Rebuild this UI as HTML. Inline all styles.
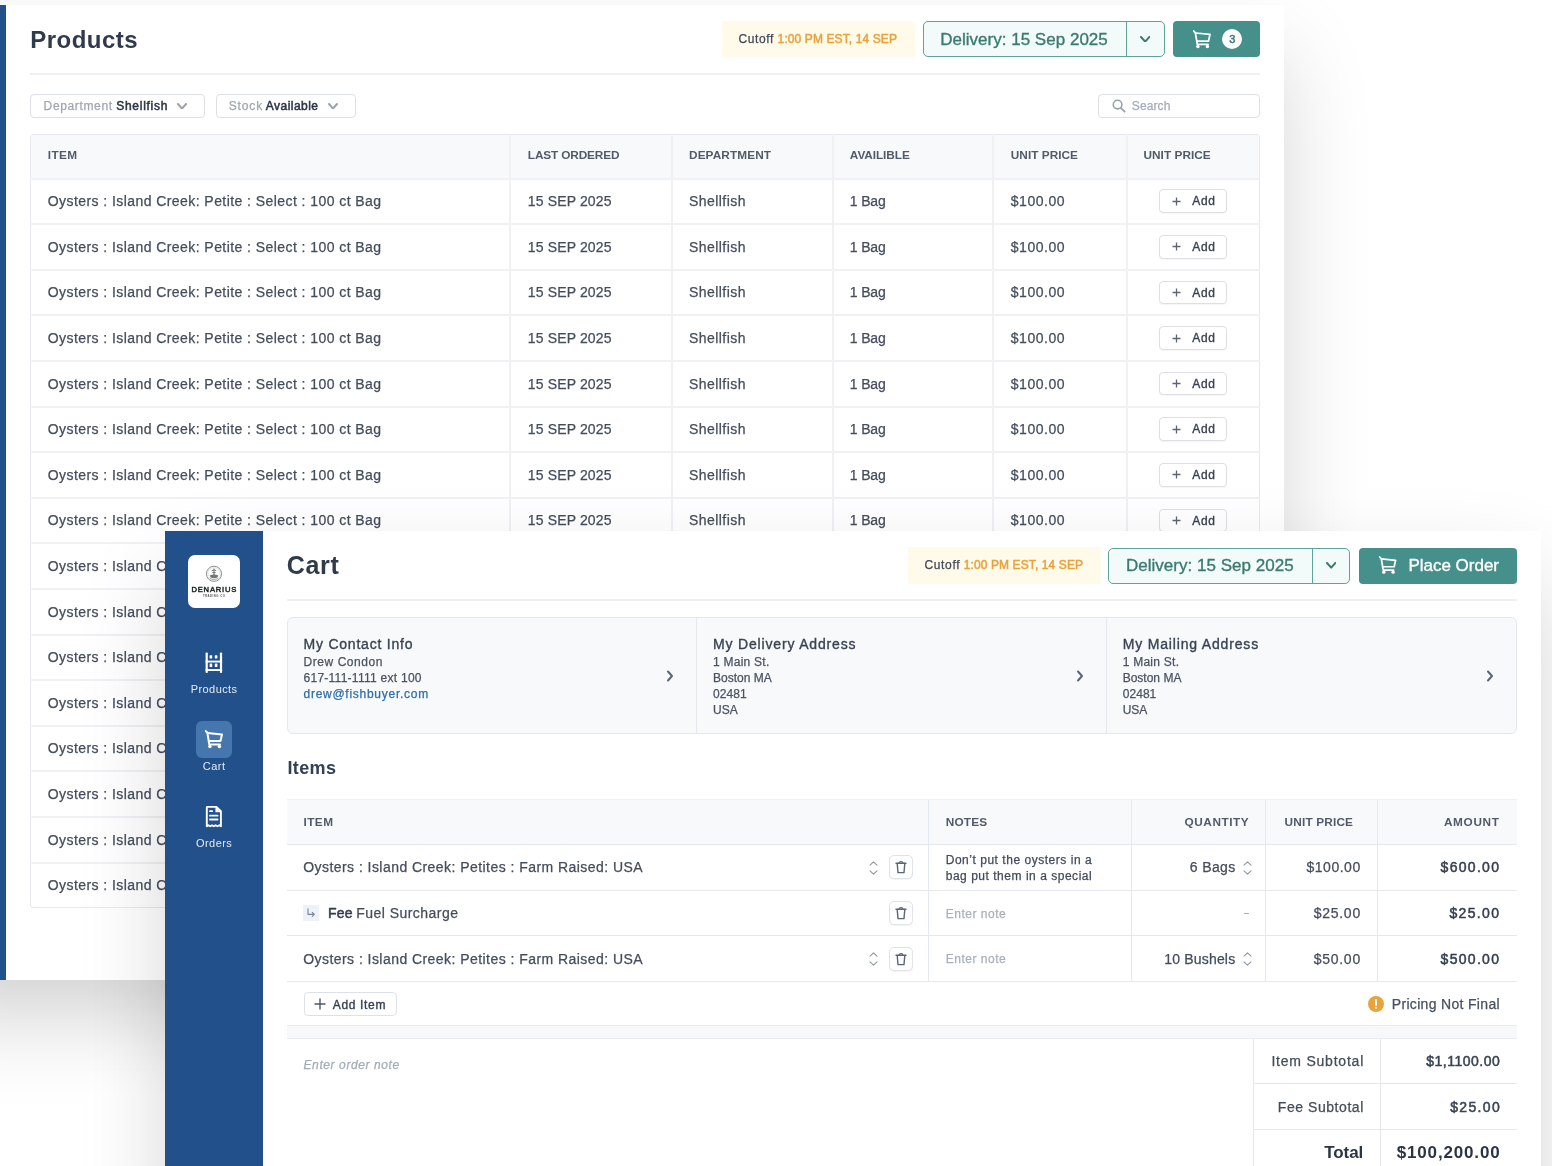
<!DOCTYPE html>
<html><head><meta charset="utf-8"><title>Products &amp; Cart</title>
<style>
html,body{margin:0;padding:0;}
body{width:1552px;height:1166px;position:relative;overflow:hidden;background:#fff;font-family:"Liberation Sans",sans-serif;}
.t{position:absolute;white-space:pre;}
</style></head><body><div id="root" style="position:absolute;left:0;top:0;width:1552px;height:1166px;will-change:transform;">
<div style="position:absolute;left:-92px;top:4.5px;width:1375.5px;height:975.5px;background:#fff;box-shadow:0 40px 90px -10px rgba(0,0,0,0.2),0 0 2px rgba(0,0,0,0.02);"></div>
<div style="position:absolute;left:0px;top:4.5px;width:6px;height:975.5px;background:#22508a;"></div>
<div class="t" style="left:30.20px;top:25.08px;font:700 24px/30px 'Liberation Sans',sans-serif;color:#2f3a4b;letter-spacing:0.498px;">Products</div>
<div style="position:absolute;left:30px;top:73px;width:1229.5px;height:2px;background:#eff0f3;"></div>
<div style="position:absolute;left:722px;top:21px;width:192.5px;height:36px;background:#fffaea;"></div>
<div class="t" style="left:738.40px;top:32.24px;font:400 12px/15px 'Liberation Sans',sans-serif;color:#414958;-webkit-text-stroke:0.25px #414958;letter-spacing:0.637px;">Cutoff</div>
<div class="t" style="left:777.60px;top:32.24px;font:400 12px/15px 'Liberation Sans',sans-serif;color:#e9a33b;-webkit-text-stroke:0.5px #e9a33b;letter-spacing:0.111px;">1:00 PM EST, 14 SEP</div>
<div style="position:absolute;left:922.5px;top:21px;width:242px;height:36px;box-sizing:border-box;border:1px solid #5fa399;border-radius:5px;background:#f2fbf9;"></div>
<div style="position:absolute;left:1126px;top:21px;width:1.2px;height:36px;background:#5fa399;"></div>
<div class="t" style="left:940.20px;top:28.81px;font:400 17px/21px 'Liberation Sans',sans-serif;color:#3b7a71;-webkit-text-stroke:0.35px #3b7a71;letter-spacing:0.016px;">Delivery: 15 Sep 2025</div>
<svg style="position:absolute;left:1139.8px;top:35.900000000000006px" width="10.4" height="6.6" viewBox="-1 -1 10.4 6.6"><path d="M0 0 L4.2 4.6 L8.4 0" fill="none" stroke="#3b7a71" stroke-width="2.0" stroke-linecap="round" stroke-linejoin="round"/></svg>
<div style="position:absolute;left:1172.8px;top:21px;width:87px;height:36px;background:#45908a;border-radius:4px;"></div>
<svg style="position:absolute;left:1193px;top:29.9px" width="18" height="19" viewBox="0 0 18 19"><g fill="none" stroke="#fff" stroke-width="1.75" stroke-linecap="round" stroke-linejoin="round"><path d="M0.5 0.9 L2.4 2.8 L4.3 14.4 L15.0 14.4"/><path d="M2.6 3.0 L17.0 4.4 L15.5 11.0 L3.7 11.0"/></g><circle cx="4.9" cy="16.5" r="1.75" fill="#fff"/><circle cx="14.4" cy="16.5" r="1.75" fill="#fff"/></svg>
<div style="position:absolute;left:1222px;top:28.8px;width:20.4px;height:20.4px;background:#fff;border-radius:50%;"></div>
<div class="t" style="left:1229.14px;top:32.39px;font:400 11px/14px 'Liberation Sans',sans-serif;color:#3b7a71;-webkit-text-stroke:0.5px #3b7a71;">3</div>
<div style="position:absolute;left:30px;top:94px;width:175px;height:23.5px;box-sizing:border-box;border:1px solid #dcdfe5;border-radius:4px;"></div>
<div class="t" style="left:43.60px;top:99.04px;font:400 12px/15px 'Liberation Sans',sans-serif;color:#a0a6b1;-webkit-text-stroke:0.25px #a0a6b1;letter-spacing:0.644px;">Department</div>
<div class="t" style="left:116.20px;top:99.04px;font:400 12px/15px 'Liberation Sans',sans-serif;color:#2b3344;-webkit-text-stroke:0.5px #2b3344;letter-spacing:0.730px;">Shellfish</div>
<svg style="position:absolute;left:177.2px;top:102.60000000000001px" width="10" height="6.6" viewBox="-1 -1 10 6.6"><path d="M0 0 L4.0 4.6 L8 0" fill="none" stroke="#9ba2ad" stroke-width="2.0" stroke-linecap="round" stroke-linejoin="round"/></svg>
<div style="position:absolute;left:216px;top:94px;width:140px;height:23.5px;box-sizing:border-box;border:1px solid #dcdfe5;border-radius:4px;"></div>
<div class="t" style="left:228.70px;top:99.04px;font:400 12px/15px 'Liberation Sans',sans-serif;color:#a0a6b1;-webkit-text-stroke:0.25px #a0a6b1;letter-spacing:0.871px;">Stock</div>
<div class="t" style="left:265.80px;top:99.04px;font:400 12px/15px 'Liberation Sans',sans-serif;color:#2b3344;-webkit-text-stroke:0.5px #2b3344;letter-spacing:0.464px;">Available</div>
<svg style="position:absolute;left:328.0px;top:102.60000000000001px" width="10" height="6.6" viewBox="-1 -1 10 6.6"><path d="M0 0 L4.0 4.6 L8 0" fill="none" stroke="#9ba2ad" stroke-width="2.0" stroke-linecap="round" stroke-linejoin="round"/></svg>
<div style="position:absolute;left:1098.4px;top:94px;width:161.2px;height:23.5px;box-sizing:border-box;border:1px solid #dcdfe5;border-radius:4px;"></div>
<svg style="position:absolute;left:1112px;top:99px" width="14" height="14" viewBox="0 0 14 14"><circle cx="5.6" cy="5.6" r="4.3" fill="none" stroke="#9aa1ab" stroke-width="1.6"/><path d="M8.8 8.8 L12.6 12.6" stroke="#9aa1ab" stroke-width="1.7" stroke-linecap="round"/></svg>
<div class="t" style="left:1131.80px;top:98.84px;font:400 12px/15px 'Liberation Sans',sans-serif;color:#a5abb6;-webkit-text-stroke:0.25px #a5abb6;letter-spacing:0.114px;">Search</div>
<div style="position:absolute;left:30px;top:133.5px;width:1230px;height:774.4000000000001px;box-sizing:border-box;border:1px solid #e7e9ee;border-radius:3px;background:#fff;overflow:hidden;"></div>
<div style="position:absolute;left:31px;top:134.5px;width:1228px;height:43.80000000000001px;background:#f8f9fb;border-radius:2px 2px 0 0;"></div>
<div style="position:absolute;left:509px;top:133.5px;width:2px;height:774.4000000000001px;background:#f0f1f4;"></div>
<div style="position:absolute;left:671px;top:133.5px;width:2px;height:774.4000000000001px;background:#f0f1f4;"></div>
<div style="position:absolute;left:832px;top:133.5px;width:2px;height:774.4000000000001px;background:#f0f1f4;"></div>
<div style="position:absolute;left:992px;top:133.5px;width:2px;height:774.4000000000001px;background:#f0f1f4;"></div>
<div style="position:absolute;left:1126px;top:133.5px;width:2px;height:774.4000000000001px;background:#f0f1f4;"></div>
<div style="position:absolute;left:30px;top:178px;width:1230px;height:2px;background:#f0f1f4;"></div>
<div style="position:absolute;left:30px;top:223px;width:1230px;height:2px;background:#f0f1f4;"></div>
<div style="position:absolute;left:30px;top:269px;width:1230px;height:2px;background:#f0f1f4;"></div>
<div style="position:absolute;left:30px;top:314px;width:1230px;height:2px;background:#f0f1f4;"></div>
<div style="position:absolute;left:30px;top:360px;width:1230px;height:2px;background:#f0f1f4;"></div>
<div style="position:absolute;left:30px;top:406px;width:1230px;height:2px;background:#f0f1f4;"></div>
<div style="position:absolute;left:30px;top:451px;width:1230px;height:2px;background:#f0f1f4;"></div>
<div style="position:absolute;left:30px;top:497px;width:1230px;height:2px;background:#f0f1f4;"></div>
<div style="position:absolute;left:30px;top:542px;width:1230px;height:2px;background:#f0f1f4;"></div>
<div style="position:absolute;left:30px;top:588px;width:1230px;height:2px;background:#f0f1f4;"></div>
<div style="position:absolute;left:30px;top:634px;width:1230px;height:2px;background:#f0f1f4;"></div>
<div style="position:absolute;left:30px;top:679px;width:1230px;height:2px;background:#f0f1f4;"></div>
<div style="position:absolute;left:30px;top:725px;width:1230px;height:2px;background:#f0f1f4;"></div>
<div style="position:absolute;left:30px;top:770px;width:1230px;height:2px;background:#f0f1f4;"></div>
<div style="position:absolute;left:30px;top:816px;width:1230px;height:2px;background:#f0f1f4;"></div>
<div style="position:absolute;left:30px;top:862px;width:1230px;height:2px;background:#f0f1f4;"></div>
<div class="t" style="left:47.70px;top:148.31px;font:700 11.8px/15px 'Liberation Sans',sans-serif;color:#515a69;letter-spacing:0.438px;">ITEM</div>
<div class="t" style="left:527.80px;top:148.31px;font:700 11.8px/15px 'Liberation Sans',sans-serif;color:#515a69;letter-spacing:-0.125px;">LAST ORDERED</div>
<div class="t" style="left:689.00px;top:148.31px;font:700 11.8px/15px 'Liberation Sans',sans-serif;color:#515a69;letter-spacing:0.106px;">DEPARTMENT</div>
<div class="t" style="left:849.80px;top:148.31px;font:700 11.8px/15px 'Liberation Sans',sans-serif;color:#515a69;letter-spacing:-0.064px;">AVAILIBLE</div>
<div class="t" style="left:1010.80px;top:148.31px;font:700 11.8px/15px 'Liberation Sans',sans-serif;color:#515a69;letter-spacing:0.038px;">UNIT PRICE</div>
<div class="t" style="left:1143.50px;top:148.31px;font:700 11.8px/15px 'Liberation Sans',sans-serif;color:#515a69;letter-spacing:0.038px;">UNIT PRICE</div>
<div class="t" style="left:47.70px;top:192.15px;font:400 14px/18px 'Liberation Sans',sans-serif;color:#444d5d;-webkit-text-stroke:0.25px #444d5d;letter-spacing:0.434px;">Oysters : Island Creek: Petite : Select : 100 ct Bag</div>
<div class="t" style="left:527.80px;top:192.15px;font:400 14px/18px 'Liberation Sans',sans-serif;color:#444d5d;-webkit-text-stroke:0.25px #444d5d;letter-spacing:0.143px;">15 SEP 2025</div>
<div class="t" style="left:689.00px;top:192.15px;font:400 14px/18px 'Liberation Sans',sans-serif;color:#444d5d;-webkit-text-stroke:0.25px #444d5d;letter-spacing:0.447px;">Shellfish</div>
<div class="t" style="left:849.80px;top:192.15px;font:400 14px/18px 'Liberation Sans',sans-serif;color:#444d5d;-webkit-text-stroke:0.25px #444d5d;letter-spacing:-0.148px;">1 Bag</div>
<div class="t" style="left:1010.80px;top:192.15px;font:400 14px/18px 'Liberation Sans',sans-serif;color:#444d5d;-webkit-text-stroke:0.25px #444d5d;letter-spacing:0.515px;">$100.00</div>
<div style="position:absolute;left:1158.7px;top:189.29999999999998px;width:68.7px;height:23.8px;box-sizing:border-box;border:1px solid #dcdfe5;border-radius:4px;background:#fff;box-shadow:0 1px 1px rgba(0,0,0,0.04);"></div>
<svg style="position:absolute;left:1171.5px;top:196.70px" width="9" height="9" viewBox="0 0 9 9"><path d="M4.5 0.5 V8.5 M0.5 4.5 H8.5" stroke="#5d6575" stroke-width="1.3"/></svg>
<div class="t" style="left:1192.30px;top:194.44px;font:400 12px/15px 'Liberation Sans',sans-serif;color:#3a4252;-webkit-text-stroke:0.35px #3a4252;letter-spacing:0.670px;">Add</div>
<div class="t" style="left:47.70px;top:237.75px;font:400 14px/18px 'Liberation Sans',sans-serif;color:#444d5d;-webkit-text-stroke:0.25px #444d5d;letter-spacing:0.434px;">Oysters : Island Creek: Petite : Select : 100 ct Bag</div>
<div class="t" style="left:527.80px;top:237.75px;font:400 14px/18px 'Liberation Sans',sans-serif;color:#444d5d;-webkit-text-stroke:0.25px #444d5d;letter-spacing:0.143px;">15 SEP 2025</div>
<div class="t" style="left:689.00px;top:237.75px;font:400 14px/18px 'Liberation Sans',sans-serif;color:#444d5d;-webkit-text-stroke:0.25px #444d5d;letter-spacing:0.447px;">Shellfish</div>
<div class="t" style="left:849.80px;top:237.75px;font:400 14px/18px 'Liberation Sans',sans-serif;color:#444d5d;-webkit-text-stroke:0.25px #444d5d;letter-spacing:-0.148px;">1 Bag</div>
<div class="t" style="left:1010.80px;top:237.75px;font:400 14px/18px 'Liberation Sans',sans-serif;color:#444d5d;-webkit-text-stroke:0.25px #444d5d;letter-spacing:0.515px;">$100.00</div>
<div style="position:absolute;left:1158.7px;top:234.89999999999998px;width:68.7px;height:23.8px;box-sizing:border-box;border:1px solid #dcdfe5;border-radius:4px;background:#fff;box-shadow:0 1px 1px rgba(0,0,0,0.04);"></div>
<svg style="position:absolute;left:1171.5px;top:242.30px" width="9" height="9" viewBox="0 0 9 9"><path d="M4.5 0.5 V8.5 M0.5 4.5 H8.5" stroke="#5d6575" stroke-width="1.3"/></svg>
<div class="t" style="left:1192.30px;top:240.04px;font:400 12px/15px 'Liberation Sans',sans-serif;color:#3a4252;-webkit-text-stroke:0.35px #3a4252;letter-spacing:0.670px;">Add</div>
<div class="t" style="left:47.70px;top:283.35px;font:400 14px/18px 'Liberation Sans',sans-serif;color:#444d5d;-webkit-text-stroke:0.25px #444d5d;letter-spacing:0.434px;">Oysters : Island Creek: Petite : Select : 100 ct Bag</div>
<div class="t" style="left:527.80px;top:283.35px;font:400 14px/18px 'Liberation Sans',sans-serif;color:#444d5d;-webkit-text-stroke:0.25px #444d5d;letter-spacing:0.143px;">15 SEP 2025</div>
<div class="t" style="left:689.00px;top:283.35px;font:400 14px/18px 'Liberation Sans',sans-serif;color:#444d5d;-webkit-text-stroke:0.25px #444d5d;letter-spacing:0.447px;">Shellfish</div>
<div class="t" style="left:849.80px;top:283.35px;font:400 14px/18px 'Liberation Sans',sans-serif;color:#444d5d;-webkit-text-stroke:0.25px #444d5d;letter-spacing:-0.148px;">1 Bag</div>
<div class="t" style="left:1010.80px;top:283.35px;font:400 14px/18px 'Liberation Sans',sans-serif;color:#444d5d;-webkit-text-stroke:0.25px #444d5d;letter-spacing:0.515px;">$100.00</div>
<div style="position:absolute;left:1158.7px;top:280.5px;width:68.7px;height:23.8px;box-sizing:border-box;border:1px solid #dcdfe5;border-radius:4px;background:#fff;box-shadow:0 1px 1px rgba(0,0,0,0.04);"></div>
<svg style="position:absolute;left:1171.5px;top:287.90px" width="9" height="9" viewBox="0 0 9 9"><path d="M4.5 0.5 V8.5 M0.5 4.5 H8.5" stroke="#5d6575" stroke-width="1.3"/></svg>
<div class="t" style="left:1192.30px;top:285.64px;font:400 12px/15px 'Liberation Sans',sans-serif;color:#3a4252;-webkit-text-stroke:0.35px #3a4252;letter-spacing:0.670px;">Add</div>
<div class="t" style="left:47.70px;top:328.95px;font:400 14px/18px 'Liberation Sans',sans-serif;color:#444d5d;-webkit-text-stroke:0.25px #444d5d;letter-spacing:0.434px;">Oysters : Island Creek: Petite : Select : 100 ct Bag</div>
<div class="t" style="left:527.80px;top:328.95px;font:400 14px/18px 'Liberation Sans',sans-serif;color:#444d5d;-webkit-text-stroke:0.25px #444d5d;letter-spacing:0.143px;">15 SEP 2025</div>
<div class="t" style="left:689.00px;top:328.95px;font:400 14px/18px 'Liberation Sans',sans-serif;color:#444d5d;-webkit-text-stroke:0.25px #444d5d;letter-spacing:0.447px;">Shellfish</div>
<div class="t" style="left:849.80px;top:328.95px;font:400 14px/18px 'Liberation Sans',sans-serif;color:#444d5d;-webkit-text-stroke:0.25px #444d5d;letter-spacing:-0.148px;">1 Bag</div>
<div class="t" style="left:1010.80px;top:328.95px;font:400 14px/18px 'Liberation Sans',sans-serif;color:#444d5d;-webkit-text-stroke:0.25px #444d5d;letter-spacing:0.515px;">$100.00</div>
<div style="position:absolute;left:1158.7px;top:326.1px;width:68.7px;height:23.8px;box-sizing:border-box;border:1px solid #dcdfe5;border-radius:4px;background:#fff;box-shadow:0 1px 1px rgba(0,0,0,0.04);"></div>
<svg style="position:absolute;left:1171.5px;top:333.50px" width="9" height="9" viewBox="0 0 9 9"><path d="M4.5 0.5 V8.5 M0.5 4.5 H8.5" stroke="#5d6575" stroke-width="1.3"/></svg>
<div class="t" style="left:1192.30px;top:331.24px;font:400 12px/15px 'Liberation Sans',sans-serif;color:#3a4252;-webkit-text-stroke:0.35px #3a4252;letter-spacing:0.670px;">Add</div>
<div class="t" style="left:47.70px;top:374.55px;font:400 14px/18px 'Liberation Sans',sans-serif;color:#444d5d;-webkit-text-stroke:0.25px #444d5d;letter-spacing:0.434px;">Oysters : Island Creek: Petite : Select : 100 ct Bag</div>
<div class="t" style="left:527.80px;top:374.55px;font:400 14px/18px 'Liberation Sans',sans-serif;color:#444d5d;-webkit-text-stroke:0.25px #444d5d;letter-spacing:0.143px;">15 SEP 2025</div>
<div class="t" style="left:689.00px;top:374.55px;font:400 14px/18px 'Liberation Sans',sans-serif;color:#444d5d;-webkit-text-stroke:0.25px #444d5d;letter-spacing:0.447px;">Shellfish</div>
<div class="t" style="left:849.80px;top:374.55px;font:400 14px/18px 'Liberation Sans',sans-serif;color:#444d5d;-webkit-text-stroke:0.25px #444d5d;letter-spacing:-0.148px;">1 Bag</div>
<div class="t" style="left:1010.80px;top:374.55px;font:400 14px/18px 'Liberation Sans',sans-serif;color:#444d5d;-webkit-text-stroke:0.25px #444d5d;letter-spacing:0.515px;">$100.00</div>
<div style="position:absolute;left:1158.7px;top:371.70000000000005px;width:68.7px;height:23.8px;box-sizing:border-box;border:1px solid #dcdfe5;border-radius:4px;background:#fff;box-shadow:0 1px 1px rgba(0,0,0,0.04);"></div>
<svg style="position:absolute;left:1171.5px;top:379.10px" width="9" height="9" viewBox="0 0 9 9"><path d="M4.5 0.5 V8.5 M0.5 4.5 H8.5" stroke="#5d6575" stroke-width="1.3"/></svg>
<div class="t" style="left:1192.30px;top:376.84px;font:400 12px/15px 'Liberation Sans',sans-serif;color:#3a4252;-webkit-text-stroke:0.35px #3a4252;letter-spacing:0.670px;">Add</div>
<div class="t" style="left:47.70px;top:420.15px;font:400 14px/18px 'Liberation Sans',sans-serif;color:#444d5d;-webkit-text-stroke:0.25px #444d5d;letter-spacing:0.434px;">Oysters : Island Creek: Petite : Select : 100 ct Bag</div>
<div class="t" style="left:527.80px;top:420.15px;font:400 14px/18px 'Liberation Sans',sans-serif;color:#444d5d;-webkit-text-stroke:0.25px #444d5d;letter-spacing:0.143px;">15 SEP 2025</div>
<div class="t" style="left:689.00px;top:420.15px;font:400 14px/18px 'Liberation Sans',sans-serif;color:#444d5d;-webkit-text-stroke:0.25px #444d5d;letter-spacing:0.447px;">Shellfish</div>
<div class="t" style="left:849.80px;top:420.15px;font:400 14px/18px 'Liberation Sans',sans-serif;color:#444d5d;-webkit-text-stroke:0.25px #444d5d;letter-spacing:-0.148px;">1 Bag</div>
<div class="t" style="left:1010.80px;top:420.15px;font:400 14px/18px 'Liberation Sans',sans-serif;color:#444d5d;-webkit-text-stroke:0.25px #444d5d;letter-spacing:0.515px;">$100.00</div>
<div style="position:absolute;left:1158.7px;top:417.3px;width:68.7px;height:23.8px;box-sizing:border-box;border:1px solid #dcdfe5;border-radius:4px;background:#fff;box-shadow:0 1px 1px rgba(0,0,0,0.04);"></div>
<svg style="position:absolute;left:1171.5px;top:424.70px" width="9" height="9" viewBox="0 0 9 9"><path d="M4.5 0.5 V8.5 M0.5 4.5 H8.5" stroke="#5d6575" stroke-width="1.3"/></svg>
<div class="t" style="left:1192.30px;top:422.44px;font:400 12px/15px 'Liberation Sans',sans-serif;color:#3a4252;-webkit-text-stroke:0.35px #3a4252;letter-spacing:0.670px;">Add</div>
<div class="t" style="left:47.70px;top:465.75px;font:400 14px/18px 'Liberation Sans',sans-serif;color:#444d5d;-webkit-text-stroke:0.25px #444d5d;letter-spacing:0.434px;">Oysters : Island Creek: Petite : Select : 100 ct Bag</div>
<div class="t" style="left:527.80px;top:465.75px;font:400 14px/18px 'Liberation Sans',sans-serif;color:#444d5d;-webkit-text-stroke:0.25px #444d5d;letter-spacing:0.143px;">15 SEP 2025</div>
<div class="t" style="left:689.00px;top:465.75px;font:400 14px/18px 'Liberation Sans',sans-serif;color:#444d5d;-webkit-text-stroke:0.25px #444d5d;letter-spacing:0.447px;">Shellfish</div>
<div class="t" style="left:849.80px;top:465.75px;font:400 14px/18px 'Liberation Sans',sans-serif;color:#444d5d;-webkit-text-stroke:0.25px #444d5d;letter-spacing:-0.148px;">1 Bag</div>
<div class="t" style="left:1010.80px;top:465.75px;font:400 14px/18px 'Liberation Sans',sans-serif;color:#444d5d;-webkit-text-stroke:0.25px #444d5d;letter-spacing:0.515px;">$100.00</div>
<div style="position:absolute;left:1158.7px;top:462.90000000000003px;width:68.7px;height:23.8px;box-sizing:border-box;border:1px solid #dcdfe5;border-radius:4px;background:#fff;box-shadow:0 1px 1px rgba(0,0,0,0.04);"></div>
<svg style="position:absolute;left:1171.5px;top:470.30px" width="9" height="9" viewBox="0 0 9 9"><path d="M4.5 0.5 V8.5 M0.5 4.5 H8.5" stroke="#5d6575" stroke-width="1.3"/></svg>
<div class="t" style="left:1192.30px;top:468.04px;font:400 12px/15px 'Liberation Sans',sans-serif;color:#3a4252;-webkit-text-stroke:0.35px #3a4252;letter-spacing:0.670px;">Add</div>
<div class="t" style="left:47.70px;top:511.35px;font:400 14px/18px 'Liberation Sans',sans-serif;color:#444d5d;-webkit-text-stroke:0.25px #444d5d;letter-spacing:0.434px;">Oysters : Island Creek: Petite : Select : 100 ct Bag</div>
<div class="t" style="left:527.80px;top:511.35px;font:400 14px/18px 'Liberation Sans',sans-serif;color:#444d5d;-webkit-text-stroke:0.25px #444d5d;letter-spacing:0.143px;">15 SEP 2025</div>
<div class="t" style="left:689.00px;top:511.35px;font:400 14px/18px 'Liberation Sans',sans-serif;color:#444d5d;-webkit-text-stroke:0.25px #444d5d;letter-spacing:0.447px;">Shellfish</div>
<div class="t" style="left:849.80px;top:511.35px;font:400 14px/18px 'Liberation Sans',sans-serif;color:#444d5d;-webkit-text-stroke:0.25px #444d5d;letter-spacing:-0.148px;">1 Bag</div>
<div class="t" style="left:1010.80px;top:511.35px;font:400 14px/18px 'Liberation Sans',sans-serif;color:#444d5d;-webkit-text-stroke:0.25px #444d5d;letter-spacing:0.515px;">$100.00</div>
<div style="position:absolute;left:1158.7px;top:508.5px;width:68.7px;height:23.8px;box-sizing:border-box;border:1px solid #dcdfe5;border-radius:4px;background:#fff;box-shadow:0 1px 1px rgba(0,0,0,0.04);"></div>
<svg style="position:absolute;left:1171.5px;top:515.90px" width="9" height="9" viewBox="0 0 9 9"><path d="M4.5 0.5 V8.5 M0.5 4.5 H8.5" stroke="#5d6575" stroke-width="1.3"/></svg>
<div class="t" style="left:1192.30px;top:513.64px;font:400 12px/15px 'Liberation Sans',sans-serif;color:#3a4252;-webkit-text-stroke:0.35px #3a4252;letter-spacing:0.670px;">Add</div>
<div class="t" style="left:47.70px;top:556.95px;font:400 14px/18px 'Liberation Sans',sans-serif;color:#444d5d;-webkit-text-stroke:0.25px #444d5d;letter-spacing:0.434px;">Oysters : Island Creek: Petite : Select : 100 ct Bag</div>
<div class="t" style="left:527.80px;top:556.95px;font:400 14px/18px 'Liberation Sans',sans-serif;color:#444d5d;-webkit-text-stroke:0.25px #444d5d;letter-spacing:0.143px;">15 SEP 2025</div>
<div class="t" style="left:689.00px;top:556.95px;font:400 14px/18px 'Liberation Sans',sans-serif;color:#444d5d;-webkit-text-stroke:0.25px #444d5d;letter-spacing:0.447px;">Shellfish</div>
<div class="t" style="left:849.80px;top:556.95px;font:400 14px/18px 'Liberation Sans',sans-serif;color:#444d5d;-webkit-text-stroke:0.25px #444d5d;letter-spacing:-0.148px;">1 Bag</div>
<div class="t" style="left:1010.80px;top:556.95px;font:400 14px/18px 'Liberation Sans',sans-serif;color:#444d5d;-webkit-text-stroke:0.25px #444d5d;letter-spacing:0.515px;">$100.00</div>
<div style="position:absolute;left:1158.7px;top:554.1px;width:68.7px;height:23.8px;box-sizing:border-box;border:1px solid #dcdfe5;border-radius:4px;background:#fff;box-shadow:0 1px 1px rgba(0,0,0,0.04);"></div>
<svg style="position:absolute;left:1171.5px;top:561.50px" width="9" height="9" viewBox="0 0 9 9"><path d="M4.5 0.5 V8.5 M0.5 4.5 H8.5" stroke="#5d6575" stroke-width="1.3"/></svg>
<div class="t" style="left:1192.30px;top:559.24px;font:400 12px/15px 'Liberation Sans',sans-serif;color:#3a4252;-webkit-text-stroke:0.35px #3a4252;letter-spacing:0.670px;">Add</div>
<div class="t" style="left:47.70px;top:602.55px;font:400 14px/18px 'Liberation Sans',sans-serif;color:#444d5d;-webkit-text-stroke:0.25px #444d5d;letter-spacing:0.434px;">Oysters : Island Creek: Petite : Select : 100 ct Bag</div>
<div class="t" style="left:527.80px;top:602.55px;font:400 14px/18px 'Liberation Sans',sans-serif;color:#444d5d;-webkit-text-stroke:0.25px #444d5d;letter-spacing:0.143px;">15 SEP 2025</div>
<div class="t" style="left:689.00px;top:602.55px;font:400 14px/18px 'Liberation Sans',sans-serif;color:#444d5d;-webkit-text-stroke:0.25px #444d5d;letter-spacing:0.447px;">Shellfish</div>
<div class="t" style="left:849.80px;top:602.55px;font:400 14px/18px 'Liberation Sans',sans-serif;color:#444d5d;-webkit-text-stroke:0.25px #444d5d;letter-spacing:-0.148px;">1 Bag</div>
<div class="t" style="left:1010.80px;top:602.55px;font:400 14px/18px 'Liberation Sans',sans-serif;color:#444d5d;-webkit-text-stroke:0.25px #444d5d;letter-spacing:0.515px;">$100.00</div>
<div style="position:absolute;left:1158.7px;top:599.7px;width:68.7px;height:23.8px;box-sizing:border-box;border:1px solid #dcdfe5;border-radius:4px;background:#fff;box-shadow:0 1px 1px rgba(0,0,0,0.04);"></div>
<svg style="position:absolute;left:1171.5px;top:607.10px" width="9" height="9" viewBox="0 0 9 9"><path d="M4.5 0.5 V8.5 M0.5 4.5 H8.5" stroke="#5d6575" stroke-width="1.3"/></svg>
<div class="t" style="left:1192.30px;top:604.84px;font:400 12px/15px 'Liberation Sans',sans-serif;color:#3a4252;-webkit-text-stroke:0.35px #3a4252;letter-spacing:0.670px;">Add</div>
<div class="t" style="left:47.70px;top:648.15px;font:400 14px/18px 'Liberation Sans',sans-serif;color:#444d5d;-webkit-text-stroke:0.25px #444d5d;letter-spacing:0.434px;">Oysters : Island Creek: Petite : Select : 100 ct Bag</div>
<div class="t" style="left:527.80px;top:648.15px;font:400 14px/18px 'Liberation Sans',sans-serif;color:#444d5d;-webkit-text-stroke:0.25px #444d5d;letter-spacing:0.143px;">15 SEP 2025</div>
<div class="t" style="left:689.00px;top:648.15px;font:400 14px/18px 'Liberation Sans',sans-serif;color:#444d5d;-webkit-text-stroke:0.25px #444d5d;letter-spacing:0.447px;">Shellfish</div>
<div class="t" style="left:849.80px;top:648.15px;font:400 14px/18px 'Liberation Sans',sans-serif;color:#444d5d;-webkit-text-stroke:0.25px #444d5d;letter-spacing:-0.148px;">1 Bag</div>
<div class="t" style="left:1010.80px;top:648.15px;font:400 14px/18px 'Liberation Sans',sans-serif;color:#444d5d;-webkit-text-stroke:0.25px #444d5d;letter-spacing:0.515px;">$100.00</div>
<div style="position:absolute;left:1158.7px;top:645.3000000000001px;width:68.7px;height:23.8px;box-sizing:border-box;border:1px solid #dcdfe5;border-radius:4px;background:#fff;box-shadow:0 1px 1px rgba(0,0,0,0.04);"></div>
<svg style="position:absolute;left:1171.5px;top:652.70px" width="9" height="9" viewBox="0 0 9 9"><path d="M4.5 0.5 V8.5 M0.5 4.5 H8.5" stroke="#5d6575" stroke-width="1.3"/></svg>
<div class="t" style="left:1192.30px;top:650.44px;font:400 12px/15px 'Liberation Sans',sans-serif;color:#3a4252;-webkit-text-stroke:0.35px #3a4252;letter-spacing:0.670px;">Add</div>
<div class="t" style="left:47.70px;top:693.75px;font:400 14px/18px 'Liberation Sans',sans-serif;color:#444d5d;-webkit-text-stroke:0.25px #444d5d;letter-spacing:0.434px;">Oysters : Island Creek: Petite : Select : 100 ct Bag</div>
<div class="t" style="left:527.80px;top:693.75px;font:400 14px/18px 'Liberation Sans',sans-serif;color:#444d5d;-webkit-text-stroke:0.25px #444d5d;letter-spacing:0.143px;">15 SEP 2025</div>
<div class="t" style="left:689.00px;top:693.75px;font:400 14px/18px 'Liberation Sans',sans-serif;color:#444d5d;-webkit-text-stroke:0.25px #444d5d;letter-spacing:0.447px;">Shellfish</div>
<div class="t" style="left:849.80px;top:693.75px;font:400 14px/18px 'Liberation Sans',sans-serif;color:#444d5d;-webkit-text-stroke:0.25px #444d5d;letter-spacing:-0.148px;">1 Bag</div>
<div class="t" style="left:1010.80px;top:693.75px;font:400 14px/18px 'Liberation Sans',sans-serif;color:#444d5d;-webkit-text-stroke:0.25px #444d5d;letter-spacing:0.515px;">$100.00</div>
<div style="position:absolute;left:1158.7px;top:690.9px;width:68.7px;height:23.8px;box-sizing:border-box;border:1px solid #dcdfe5;border-radius:4px;background:#fff;box-shadow:0 1px 1px rgba(0,0,0,0.04);"></div>
<svg style="position:absolute;left:1171.5px;top:698.30px" width="9" height="9" viewBox="0 0 9 9"><path d="M4.5 0.5 V8.5 M0.5 4.5 H8.5" stroke="#5d6575" stroke-width="1.3"/></svg>
<div class="t" style="left:1192.30px;top:696.04px;font:400 12px/15px 'Liberation Sans',sans-serif;color:#3a4252;-webkit-text-stroke:0.35px #3a4252;letter-spacing:0.670px;">Add</div>
<div class="t" style="left:47.70px;top:739.35px;font:400 14px/18px 'Liberation Sans',sans-serif;color:#444d5d;-webkit-text-stroke:0.25px #444d5d;letter-spacing:0.434px;">Oysters : Island Creek: Petite : Select : 100 ct Bag</div>
<div class="t" style="left:527.80px;top:739.35px;font:400 14px/18px 'Liberation Sans',sans-serif;color:#444d5d;-webkit-text-stroke:0.25px #444d5d;letter-spacing:0.143px;">15 SEP 2025</div>
<div class="t" style="left:689.00px;top:739.35px;font:400 14px/18px 'Liberation Sans',sans-serif;color:#444d5d;-webkit-text-stroke:0.25px #444d5d;letter-spacing:0.447px;">Shellfish</div>
<div class="t" style="left:849.80px;top:739.35px;font:400 14px/18px 'Liberation Sans',sans-serif;color:#444d5d;-webkit-text-stroke:0.25px #444d5d;letter-spacing:-0.148px;">1 Bag</div>
<div class="t" style="left:1010.80px;top:739.35px;font:400 14px/18px 'Liberation Sans',sans-serif;color:#444d5d;-webkit-text-stroke:0.25px #444d5d;letter-spacing:0.515px;">$100.00</div>
<div style="position:absolute;left:1158.7px;top:736.5000000000001px;width:68.7px;height:23.8px;box-sizing:border-box;border:1px solid #dcdfe5;border-radius:4px;background:#fff;box-shadow:0 1px 1px rgba(0,0,0,0.04);"></div>
<svg style="position:absolute;left:1171.5px;top:743.90px" width="9" height="9" viewBox="0 0 9 9"><path d="M4.5 0.5 V8.5 M0.5 4.5 H8.5" stroke="#5d6575" stroke-width="1.3"/></svg>
<div class="t" style="left:1192.30px;top:741.64px;font:400 12px/15px 'Liberation Sans',sans-serif;color:#3a4252;-webkit-text-stroke:0.35px #3a4252;letter-spacing:0.670px;">Add</div>
<div class="t" style="left:47.70px;top:784.95px;font:400 14px/18px 'Liberation Sans',sans-serif;color:#444d5d;-webkit-text-stroke:0.25px #444d5d;letter-spacing:0.434px;">Oysters : Island Creek: Petite : Select : 100 ct Bag</div>
<div class="t" style="left:527.80px;top:784.95px;font:400 14px/18px 'Liberation Sans',sans-serif;color:#444d5d;-webkit-text-stroke:0.25px #444d5d;letter-spacing:0.143px;">15 SEP 2025</div>
<div class="t" style="left:689.00px;top:784.95px;font:400 14px/18px 'Liberation Sans',sans-serif;color:#444d5d;-webkit-text-stroke:0.25px #444d5d;letter-spacing:0.447px;">Shellfish</div>
<div class="t" style="left:849.80px;top:784.95px;font:400 14px/18px 'Liberation Sans',sans-serif;color:#444d5d;-webkit-text-stroke:0.25px #444d5d;letter-spacing:-0.148px;">1 Bag</div>
<div class="t" style="left:1010.80px;top:784.95px;font:400 14px/18px 'Liberation Sans',sans-serif;color:#444d5d;-webkit-text-stroke:0.25px #444d5d;letter-spacing:0.515px;">$100.00</div>
<div style="position:absolute;left:1158.7px;top:782.1px;width:68.7px;height:23.8px;box-sizing:border-box;border:1px solid #dcdfe5;border-radius:4px;background:#fff;box-shadow:0 1px 1px rgba(0,0,0,0.04);"></div>
<svg style="position:absolute;left:1171.5px;top:789.50px" width="9" height="9" viewBox="0 0 9 9"><path d="M4.5 0.5 V8.5 M0.5 4.5 H8.5" stroke="#5d6575" stroke-width="1.3"/></svg>
<div class="t" style="left:1192.30px;top:787.24px;font:400 12px/15px 'Liberation Sans',sans-serif;color:#3a4252;-webkit-text-stroke:0.35px #3a4252;letter-spacing:0.670px;">Add</div>
<div class="t" style="left:47.70px;top:830.55px;font:400 14px/18px 'Liberation Sans',sans-serif;color:#444d5d;-webkit-text-stroke:0.25px #444d5d;letter-spacing:0.434px;">Oysters : Island Creek: Petite : Select : 100 ct Bag</div>
<div class="t" style="left:527.80px;top:830.55px;font:400 14px/18px 'Liberation Sans',sans-serif;color:#444d5d;-webkit-text-stroke:0.25px #444d5d;letter-spacing:0.143px;">15 SEP 2025</div>
<div class="t" style="left:689.00px;top:830.55px;font:400 14px/18px 'Liberation Sans',sans-serif;color:#444d5d;-webkit-text-stroke:0.25px #444d5d;letter-spacing:0.447px;">Shellfish</div>
<div class="t" style="left:849.80px;top:830.55px;font:400 14px/18px 'Liberation Sans',sans-serif;color:#444d5d;-webkit-text-stroke:0.25px #444d5d;letter-spacing:-0.148px;">1 Bag</div>
<div class="t" style="left:1010.80px;top:830.55px;font:400 14px/18px 'Liberation Sans',sans-serif;color:#444d5d;-webkit-text-stroke:0.25px #444d5d;letter-spacing:0.515px;">$100.00</div>
<div style="position:absolute;left:1158.7px;top:827.6999999999999px;width:68.7px;height:23.8px;box-sizing:border-box;border:1px solid #dcdfe5;border-radius:4px;background:#fff;box-shadow:0 1px 1px rgba(0,0,0,0.04);"></div>
<svg style="position:absolute;left:1171.5px;top:835.10px" width="9" height="9" viewBox="0 0 9 9"><path d="M4.5 0.5 V8.5 M0.5 4.5 H8.5" stroke="#5d6575" stroke-width="1.3"/></svg>
<div class="t" style="left:1192.30px;top:832.84px;font:400 12px/15px 'Liberation Sans',sans-serif;color:#3a4252;-webkit-text-stroke:0.35px #3a4252;letter-spacing:0.670px;">Add</div>
<div class="t" style="left:47.70px;top:876.15px;font:400 14px/18px 'Liberation Sans',sans-serif;color:#444d5d;-webkit-text-stroke:0.25px #444d5d;letter-spacing:0.434px;">Oysters : Island Creek: Petite : Select : 100 ct Bag</div>
<div class="t" style="left:527.80px;top:876.15px;font:400 14px/18px 'Liberation Sans',sans-serif;color:#444d5d;-webkit-text-stroke:0.25px #444d5d;letter-spacing:0.143px;">15 SEP 2025</div>
<div class="t" style="left:689.00px;top:876.15px;font:400 14px/18px 'Liberation Sans',sans-serif;color:#444d5d;-webkit-text-stroke:0.25px #444d5d;letter-spacing:0.447px;">Shellfish</div>
<div class="t" style="left:849.80px;top:876.15px;font:400 14px/18px 'Liberation Sans',sans-serif;color:#444d5d;-webkit-text-stroke:0.25px #444d5d;letter-spacing:-0.148px;">1 Bag</div>
<div class="t" style="left:1010.80px;top:876.15px;font:400 14px/18px 'Liberation Sans',sans-serif;color:#444d5d;-webkit-text-stroke:0.25px #444d5d;letter-spacing:0.515px;">$100.00</div>
<div style="position:absolute;left:1158.7px;top:873.3000000000001px;width:68.7px;height:23.8px;box-sizing:border-box;border:1px solid #dcdfe5;border-radius:4px;background:#fff;box-shadow:0 1px 1px rgba(0,0,0,0.04);"></div>
<svg style="position:absolute;left:1171.5px;top:880.70px" width="9" height="9" viewBox="0 0 9 9"><path d="M4.5 0.5 V8.5 M0.5 4.5 H8.5" stroke="#5d6575" stroke-width="1.3"/></svg>
<div class="t" style="left:1192.30px;top:878.44px;font:400 12px/15px 'Liberation Sans',sans-serif;color:#3a4252;-webkit-text-stroke:0.35px #3a4252;letter-spacing:0.670px;">Add</div>
<div style="position:absolute;left:165px;top:530.5px;width:1376px;height:700px;background:#fff;box-shadow:0 40px 90px -10px rgba(0,0,0,0.2),0 0 2px rgba(0,0,0,0.02);"></div>
<div style="position:absolute;left:165px;top:530.5px;width:97.8px;height:700px;background:#22508a;"></div>
<div style="position:absolute;left:187.5px;top:555px;width:52.5px;height:52.5px;background:#fff;border-radius:7px;"></div>
<svg style="position:absolute;left:205px;top:565px" width="18" height="18" viewBox="0 0 18 18"><circle cx="9" cy="8.8" r="7.6" fill="none" stroke="#7d8582" stroke-width="0.9"/><circle cx="9" cy="8.8" r="6.1" fill="none" stroke="#aab1ae" stroke-width="0.7" stroke-dasharray="1 0.8"/><path d="M4.6 10.6 Q9 8.6 13.4 10.6 L12.4 12.6 Q9 13.8 5.6 12.6 Z" fill="#6f7874"/><path d="M9 3.6 V10 M6.8 5.6 Q9 4.4 11.2 5.6 M7.4 7.6 H10.6" fill="none" stroke="#5f6864" stroke-width="0.9"/><path d="M4.8 13.6 Q9 15.4 13.2 13.6" fill="none" stroke="#8d9592" stroke-width="0.7"/></svg>
<div class="t" style="left:191.40px;top:584.67px;font:400 7.6px/10px 'Liberation Sans',sans-serif;color:#1f2925;-webkit-text-stroke:0.5px #1f2925;letter-spacing:0.821px;">DENARIUS</div>
<div class="t" style="left:202.90px;top:594.03px;font:700 2.8px/4px 'Liberation Sans',sans-serif;color:#555;letter-spacing:0.476px;">TRADING CO</div>
<svg style="position:absolute;left:205px;top:652px" width="18" height="22" viewBox="0 0 18 22"><g fill="#fff"><rect x="0.6" y="0.4" width="2.2" height="20.6" rx="0.8"/><rect x="14.9" y="0.4" width="2.2" height="20.6" rx="0.8"/><rect x="0.6" y="8.6" width="16.5" height="1.9"/><rect x="0.6" y="17.1" width="16.5" height="1.9"/><rect x="4.6" y="3.2" width="2.6" height="3.2" rx="0.5"/><rect x="9.8" y="3.2" width="2.6" height="3.2" rx="0.5"/><rect x="4.6" y="11.5" width="2.6" height="3.4" rx="0.5"/><rect x="9.8" y="11.5" width="2.6" height="3.4" rx="0.5"/></g></svg>
<div class="t" style="left:190.75px;top:682.19px;font:400 11px/14px 'Liberation Sans',sans-serif;color:#e4ebf4;letter-spacing:0.411px;">Products</div>
<div style="position:absolute;left:195.8px;top:721.4px;width:36px;height:36.3px;background:#4577ae;border-radius:6px;"></div>
<svg style="position:absolute;left:204.8px;top:730.2px" width="18" height="19" viewBox="0 0 18 19"><g fill="none" stroke="#fff" stroke-width="2.0" stroke-linecap="round" stroke-linejoin="round"><path d="M0.5 0.9 L2.4 2.8 L4.3 14.4 L15.0 14.4"/><path d="M2.6 3.0 L17.0 4.4 L15.5 11.0 L3.7 11.0"/></g><circle cx="4.9" cy="16.5" r="1.75" fill="#fff"/><circle cx="14.4" cy="16.5" r="1.75" fill="#fff"/></svg>
<div class="t" style="left:202.75px;top:758.99px;font:400 11px/14px 'Liberation Sans',sans-serif;color:#e4ebf4;letter-spacing:0.506px;">Cart</div>
<svg style="position:absolute;left:205px;top:806px" width="18" height="22" viewBox="0 0 18 22"><path d="M1.8 1.6 Q1.8 0.9 2.5 0.9 H11.4 L15.9 5.3 V20.3 L14.2 19.2 L12.4 20.3 L10.6 19.2 L8.8 20.3 L7 19.2 L5.2 20.3 L3.4 19.2 L1.8 20.3 Z" fill="none" stroke="#fff" stroke-width="1.9" stroke-linejoin="round"/><path d="M11 1 V5.6 H15.8" fill="#fff" stroke="#fff" stroke-width="1.2"/><path d="M5 5.2 H7.3 M5 9.7 H12.6 M5 13.5 H12.6" stroke="#fff" stroke-width="1.8" stroke-linecap="round"/></svg>
<div class="t" style="left:196.00px;top:836.19px;font:400 11px/14px 'Liberation Sans',sans-serif;color:#e4ebf4;letter-spacing:0.435px;">Orders</div>
<div class="t" style="left:286.80px;top:550.44px;font:700 25px/31px 'Liberation Sans',sans-serif;color:#2f3a4b;letter-spacing:0.661px;">Cart</div>
<div style="position:absolute;left:287px;top:599.3px;width:1229.5px;height:2px;background:#eff0f3;"></div>
<div style="position:absolute;left:908px;top:547.3px;width:192.5px;height:36.3px;background:#fffaea;"></div>
<div class="t" style="left:924.50px;top:558.44px;font:400 12px/15px 'Liberation Sans',sans-serif;color:#414958;-webkit-text-stroke:0.25px #414958;letter-spacing:0.637px;">Cutoff</div>
<div class="t" style="left:963.70px;top:558.44px;font:400 12px/15px 'Liberation Sans',sans-serif;color:#e9a33b;-webkit-text-stroke:0.5px #e9a33b;letter-spacing:0.111px;">1:00 PM EST, 14 SEP</div>
<div style="position:absolute;left:1108.3px;top:547.5px;width:242px;height:36px;box-sizing:border-box;border:1px solid #5fa399;border-radius:5px;background:#f2fbf9;"></div>
<div style="position:absolute;left:1311.9px;top:547.5px;width:1.2px;height:36px;background:#5fa399;"></div>
<div class="t" style="left:1126.00px;top:555.11px;font:400 17px/21px 'Liberation Sans',sans-serif;color:#3b7a71;-webkit-text-stroke:0.35px #3b7a71;letter-spacing:0.016px;">Delivery: 15 Sep 2025</div>
<svg style="position:absolute;left:1325.6px;top:562.3000000000001px" width="10.4" height="6.6" viewBox="-1 -1 10.4 6.6"><path d="M0 0 L4.2 4.6 L8.4 0" fill="none" stroke="#3b7a71" stroke-width="2.0" stroke-linecap="round" stroke-linejoin="round"/></svg>
<div style="position:absolute;left:1358.5px;top:547.5px;width:158px;height:36px;background:#45908a;border-radius:4px;"></div>
<svg style="position:absolute;left:1379px;top:556.2px" width="17.6" height="18.6" viewBox="0 0 18 19"><g fill="none" stroke="#fff" stroke-width="1.75" stroke-linecap="round" stroke-linejoin="round"><path d="M0.5 0.9 L2.4 2.8 L4.3 14.4 L15.0 14.4"/><path d="M2.6 3.0 L17.0 4.4 L15.5 11.0 L3.7 11.0"/></g><circle cx="4.9" cy="16.5" r="1.75" fill="#fff"/><circle cx="14.4" cy="16.5" r="1.75" fill="#fff"/></svg>
<div class="t" style="left:1408.40px;top:555.11px;font:400 17px/21px 'Liberation Sans',sans-serif;color:#ffffff;-webkit-text-stroke:0.35px #ffffff;letter-spacing:-0.010px;">Place Order</div>
<div style="position:absolute;left:287px;top:617.3px;width:1229.5px;height:117.1px;box-sizing:border-box;border:1px solid #e3e7ee;border-radius:6px;background:#f8f9fb;"></div>
<div style="position:absolute;left:696px;top:617.3px;width:1.2px;height:117.1px;background:#e3e7ee;"></div>
<div style="position:absolute;left:1105.5px;top:617.3px;width:1.2px;height:117.1px;background:#e3e7ee;"></div>
<div class="t" style="left:303.50px;top:634.55px;font:400 14px/18px 'Liberation Sans',sans-serif;color:#394354;-webkit-text-stroke:0.35px #394354;letter-spacing:0.782px;">My Contact Info</div>
<div class="t" style="left:303.50px;top:654.94px;font:400 12px/15px 'Liberation Sans',sans-serif;color:#4a5362;-webkit-text-stroke:0.25px #4a5362;letter-spacing:0.562px;">Drew Condon</div>
<div class="t" style="left:303.50px;top:671.01px;font:400 12px/15px 'Liberation Sans',sans-serif;color:#4a5362;-webkit-text-stroke:0.25px #4a5362;letter-spacing:0.264px;">617-111-1111 ext 100</div>
<div class="t" style="left:303.50px;top:687.08px;font:400 12px/15px 'Liberation Sans',sans-serif;color:#2f6ea6;-webkit-text-stroke:0.25px #2f6ea6;letter-spacing:0.733px;">drew@fishbuyer.com</div>
<div class="t" style="left:713.00px;top:634.55px;font:400 14px/18px 'Liberation Sans',sans-serif;color:#394354;-webkit-text-stroke:0.35px #394354;letter-spacing:0.828px;">My Delivery Address</div>
<div class="t" style="left:713.00px;top:654.94px;font:400 12px/15px 'Liberation Sans',sans-serif;color:#4a5362;-webkit-text-stroke:0.25px #4a5362;letter-spacing:0.252px;">1 Main St.</div>
<div class="t" style="left:713.00px;top:671.01px;font:400 12px/15px 'Liberation Sans',sans-serif;color:#4a5362;-webkit-text-stroke:0.25px #4a5362;">Boston MA</div>
<div class="t" style="left:713.00px;top:687.08px;font:400 12px/15px 'Liberation Sans',sans-serif;color:#4a5362;-webkit-text-stroke:0.25px #4a5362;letter-spacing:0.056px;">02481</div>
<div class="t" style="left:713.00px;top:703.15px;font:400 12px/15px 'Liberation Sans',sans-serif;color:#4a5362;-webkit-text-stroke:0.25px #4a5362;letter-spacing:0.006px;">USA</div>
<div class="t" style="left:1122.70px;top:634.55px;font:400 14px/18px 'Liberation Sans',sans-serif;color:#394354;-webkit-text-stroke:0.35px #394354;letter-spacing:0.830px;">My Mailing Address</div>
<div class="t" style="left:1122.70px;top:654.94px;font:400 12px/15px 'Liberation Sans',sans-serif;color:#4a5362;-webkit-text-stroke:0.25px #4a5362;letter-spacing:0.252px;">1 Main St.</div>
<div class="t" style="left:1122.70px;top:671.01px;font:400 12px/15px 'Liberation Sans',sans-serif;color:#4a5362;-webkit-text-stroke:0.25px #4a5362;">Boston MA</div>
<div class="t" style="left:1122.70px;top:687.08px;font:400 12px/15px 'Liberation Sans',sans-serif;color:#4a5362;-webkit-text-stroke:0.25px #4a5362;letter-spacing:0.056px;">02481</div>
<div class="t" style="left:1122.70px;top:703.15px;font:400 12px/15px 'Liberation Sans',sans-serif;color:#4a5362;-webkit-text-stroke:0.25px #4a5362;letter-spacing:0.006px;">USA</div>
<svg style="position:absolute;left:666px;top:669.5px" width="8" height="12" viewBox="0 0 8 12"><path d="M2 1.5 L6 6 L2 10.5" fill="none" stroke="#5b6577" stroke-width="2" stroke-linecap="round" stroke-linejoin="round"/></svg>
<svg style="position:absolute;left:1075.8px;top:669.5px" width="8" height="12" viewBox="0 0 8 12"><path d="M2 1.5 L6 6 L2 10.5" fill="none" stroke="#5b6577" stroke-width="2" stroke-linecap="round" stroke-linejoin="round"/></svg>
<svg style="position:absolute;left:1486.3px;top:669.5px" width="8" height="12" viewBox="0 0 8 12"><path d="M2 1.5 L6 6 L2 10.5" fill="none" stroke="#5b6577" stroke-width="2" stroke-linecap="round" stroke-linejoin="round"/></svg>
<div class="t" style="left:287.50px;top:756.56px;font:700 18px/22px 'Liberation Sans',sans-serif;color:#344055;letter-spacing:0.367px;">Items</div>
<div style="position:absolute;left:287px;top:799.6px;width:1229.6px;height:44.89999999999998px;background:#f8f9fb;"></div>
<div style="position:absolute;left:287px;top:799.0px;width:1229.6px;height:1.2px;background:#eef1f5;"></div>
<div style="position:absolute;left:287px;top:843.9px;width:1229.6px;height:1.2px;background:#e4e8ef;"></div>
<div style="position:absolute;left:287px;top:889.6999999999999px;width:1229.6px;height:1.2px;background:#e4e8ef;"></div>
<div style="position:absolute;left:287px;top:934.9px;width:1229.6px;height:1.2px;background:#e4e8ef;"></div>
<div style="position:absolute;left:287px;top:980.9px;width:1229.6px;height:1.2px;background:#e4e8ef;"></div>
<div style="position:absolute;left:928.1px;top:799.6px;width:1.2px;height:181.89999999999998px;background:#e4e8ef;"></div>
<div style="position:absolute;left:1130.7px;top:799.6px;width:1.2px;height:181.89999999999998px;background:#e4e8ef;"></div>
<div style="position:absolute;left:1264.7px;top:799.6px;width:1.2px;height:181.89999999999998px;background:#e4e8ef;"></div>
<div style="position:absolute;left:1376.8000000000002px;top:799.6px;width:1.2px;height:181.89999999999998px;background:#e4e8ef;"></div>
<div class="t" style="left:303.50px;top:814.71px;font:700 11.8px/15px 'Liberation Sans',sans-serif;color:#515a69;letter-spacing:0.438px;">ITEM</div>
<div class="t" style="left:945.70px;top:814.71px;font:700 11.8px/15px 'Liberation Sans',sans-serif;color:#515a69;letter-spacing:0.215px;">NOTES</div>
<div class="t" style="left:1184.60px;top:814.71px;font:700 11.8px/15px 'Liberation Sans',sans-serif;color:#515a69;letter-spacing:0.529px;">QUANTITY</div>
<div class="t" style="left:1284.60px;top:814.71px;font:700 11.8px/15px 'Liberation Sans',sans-serif;color:#515a69;letter-spacing:0.171px;">UNIT PRICE</div>
<div class="t" style="left:1443.90px;top:814.71px;font:700 11.8px/15px 'Liberation Sans',sans-serif;color:#515a69;letter-spacing:0.664px;">AMOUNT</div>
<div class="t" style="left:303.20px;top:858.35px;font:400 14px/18px 'Liberation Sans',sans-serif;color:#444d5d;-webkit-text-stroke:0.25px #444d5d;letter-spacing:0.448px;">Oysters : Island Creek: Petites : Farm Raised: USA</div>
<svg style="position:absolute;left:869px;top:860.5px" width="9" height="14" viewBox="0 0 9 14"><path d="M1 4.2 L4.5 0.9 L8 4.2 M1 9.8 L4.5 13.1 L8 9.8" fill="none" stroke="#8e97a6" stroke-width="1.1" stroke-linecap="round" stroke-linejoin="round"/></svg>
<div style="position:absolute;left:888.7px;top:855.4px;width:24px;height:24px;box-sizing:border-box;border:1px solid #dfe3ea;border-radius:5px;background:#fff;box-shadow:0 1px 1px rgba(20,40,80,0.05);"></div>
<svg style="position:absolute;left:894.7px;top:860.4px" width="12" height="14" viewBox="0 0 12 14"><g fill="none" stroke="#5d6678" stroke-width="1.4" stroke-linejoin="round" stroke-linecap="round"><path d="M1 3.2 H11"/><path d="M4.2 3 C4.2 1.2 7.8 1.2 7.8 3"/><path d="M2.2 3.4 L3 12.6 H9 L9.8 3.4"/></g></svg>
<div class="t" style="left:945.70px;top:852.74px;font:400 12px/15px 'Liberation Sans',sans-serif;color:#424b5a;-webkit-text-stroke:0.25px #424b5a;letter-spacing:0.530px;">Don’t put the oysters in a</div>
<div class="t" style="left:945.70px;top:869.14px;font:400 12px/15px 'Liberation Sans',sans-serif;color:#424b5a;-webkit-text-stroke:0.25px #424b5a;letter-spacing:0.524px;">bag put them in a special</div>
<div class="t" style="left:1189.80px;top:858.35px;font:400 14px/18px 'Liberation Sans',sans-serif;color:#444d5d;-webkit-text-stroke:0.25px #444d5d;letter-spacing:0.361px;">6 Bags</div>
<svg style="position:absolute;left:1242.8px;top:860.5px" width="9" height="14" viewBox="0 0 9 14"><path d="M1 4.2 L4.5 0.9 L8 4.2 M1 9.8 L4.5 13.1 L8 9.8" fill="none" stroke="#8e97a6" stroke-width="1.1" stroke-linecap="round" stroke-linejoin="round"/></svg>
<div class="t" style="left:1306.50px;top:858.35px;font:400 14px/18px 'Liberation Sans',sans-serif;color:#444d5d;-webkit-text-stroke:0.25px #444d5d;letter-spacing:0.515px;">$100.00</div>
<div class="t" style="left:1440.60px;top:858.35px;font:400 14px/18px 'Liberation Sans',sans-serif;color:#353e4f;-webkit-text-stroke:0.5px #353e4f;letter-spacing:1.298px;">$600.00</div>
<div style="position:absolute;left:303px;top:905px;width:16px;height:15.8px;background:#eef2f8;"></div>
<svg style="position:absolute;left:306px;top:908px" width="10" height="10" viewBox="0 0 10 10"><path d="M2 0.8 V6.4 H8.2 M6.3 4.5 L8.3 6.4 L6.3 8.3" fill="none" stroke="#7c8698" stroke-width="1.1" stroke-linecap="round" stroke-linejoin="round"/></svg>
<div class="t" style="left:328.00px;top:903.95px;font:400 14px/18px 'Liberation Sans',sans-serif;color:#353e4f;-webkit-text-stroke:0.5px #353e4f;letter-spacing:0.188px;">Fee</div>
<div class="t" style="left:356.20px;top:903.95px;font:400 14px/18px 'Liberation Sans',sans-serif;color:#444d5d;-webkit-text-stroke:0.25px #444d5d;letter-spacing:0.468px;">Fuel Surcharge</div>
<div style="position:absolute;left:888.7px;top:900.6px;width:24px;height:24px;box-sizing:border-box;border:1px solid #dfe3ea;border-radius:5px;background:#fff;box-shadow:0 1px 1px rgba(20,40,80,0.05);"></div>
<svg style="position:absolute;left:894.7px;top:905.6px" width="12" height="14" viewBox="0 0 12 14"><g fill="none" stroke="#5d6678" stroke-width="1.4" stroke-linejoin="round" stroke-linecap="round"><path d="M1 3.2 H11"/><path d="M4.2 3 C4.2 1.2 7.8 1.2 7.8 3"/><path d="M2.2 3.4 L3 12.6 H9 L9.8 3.4"/></g></svg>
<div class="t" style="left:945.70px;top:906.54px;font:400 12px/15px 'Liberation Sans',sans-serif;color:#a9b0bc;-webkit-text-stroke:0.25px #a9b0bc;letter-spacing:0.514px;">Enter note</div>
<div style="position:absolute;left:1243.5px;top:912.5px;width:5px;height:1.2px;background:#a9b0bc;"></div>
<div class="t" style="left:1313.70px;top:903.95px;font:400 14px/18px 'Liberation Sans',sans-serif;color:#444d5d;-webkit-text-stroke:0.25px #444d5d;letter-spacing:0.734px;">$25.00</div>
<div class="t" style="left:1449.50px;top:903.95px;font:400 14px/18px 'Liberation Sans',sans-serif;color:#353e4f;-webkit-text-stroke:0.5px #353e4f;letter-spacing:1.334px;">$25.00</div>
<div class="t" style="left:303.20px;top:949.65px;font:400 14px/18px 'Liberation Sans',sans-serif;color:#444d5d;-webkit-text-stroke:0.25px #444d5d;letter-spacing:0.448px;">Oysters : Island Creek: Petites : Farm Raised: USA</div>
<svg style="position:absolute;left:869px;top:951.8px" width="9" height="14" viewBox="0 0 9 14"><path d="M1 4.2 L4.5 0.9 L8 4.2 M1 9.8 L4.5 13.1 L8 9.8" fill="none" stroke="#8e97a6" stroke-width="1.1" stroke-linecap="round" stroke-linejoin="round"/></svg>
<div style="position:absolute;left:888.7px;top:946.6px;width:24px;height:24px;box-sizing:border-box;border:1px solid #dfe3ea;border-radius:5px;background:#fff;box-shadow:0 1px 1px rgba(20,40,80,0.05);"></div>
<svg style="position:absolute;left:894.7px;top:951.6px" width="12" height="14" viewBox="0 0 12 14"><g fill="none" stroke="#5d6678" stroke-width="1.4" stroke-linejoin="round" stroke-linecap="round"><path d="M1 3.2 H11"/><path d="M4.2 3 C4.2 1.2 7.8 1.2 7.8 3"/><path d="M2.2 3.4 L3 12.6 H9 L9.8 3.4"/></g></svg>
<div class="t" style="left:945.70px;top:952.24px;font:400 12px/15px 'Liberation Sans',sans-serif;color:#a9b0bc;-webkit-text-stroke:0.25px #a9b0bc;letter-spacing:0.514px;">Enter note</div>
<div class="t" style="left:1164.20px;top:949.65px;font:400 14px/18px 'Liberation Sans',sans-serif;color:#444d5d;-webkit-text-stroke:0.25px #444d5d;letter-spacing:0.191px;">10 Bushels</div>
<svg style="position:absolute;left:1242.8px;top:951.8px" width="9" height="14" viewBox="0 0 9 14"><path d="M1 4.2 L4.5 0.9 L8 4.2 M1 9.8 L4.5 13.1 L8 9.8" fill="none" stroke="#8e97a6" stroke-width="1.1" stroke-linecap="round" stroke-linejoin="round"/></svg>
<div class="t" style="left:1313.70px;top:949.65px;font:400 14px/18px 'Liberation Sans',sans-serif;color:#444d5d;-webkit-text-stroke:0.25px #444d5d;letter-spacing:0.734px;">$50.00</div>
<div class="t" style="left:1440.60px;top:949.65px;font:400 14px/18px 'Liberation Sans',sans-serif;color:#353e4f;-webkit-text-stroke:0.5px #353e4f;letter-spacing:1.298px;">$500.00</div>
<div style="position:absolute;left:303.5px;top:992.2px;width:93.4px;height:23.6px;box-sizing:border-box;border:1px solid #dde2ea;border-radius:4px;background:#fff;"></div>
<svg style="position:absolute;left:314px;top:998.3px" width="12" height="12" viewBox="0 0 12 12"><path d="M6 0.5 V11.5 M0.5 6 H11.5" stroke="#4e5768" stroke-width="1.4"/></svg>
<div class="t" style="left:332.80px;top:997.54px;font:400 12px/15px 'Liberation Sans',sans-serif;color:#364052;-webkit-text-stroke:0.35px #364052;letter-spacing:0.653px;">Add Item</div>
<div style="position:absolute;left:1367.6px;top:995.9px;width:16.4px;height:16.4px;background:#e9a33b;border-radius:50%;"></div>
<div style="position:absolute;left:1375px;top:999px;width:1.8px;height:6.8px;background:#fff;border-radius:1px;"></div>
<div style="position:absolute;left:1375px;top:1007.2px;width:1.8px;height:1.8px;background:#fff;border-radius:1px;"></div>
<div class="t" style="left:1391.80px;top:995.25px;font:400 14px/18px 'Liberation Sans',sans-serif;color:#465062;-webkit-text-stroke:0.25px #465062;letter-spacing:0.319px;">Pricing Not Final</div>
<div style="position:absolute;left:287px;top:1025px;width:1229.6px;height:13.6px;background:#f7f8fa;border-top:1px solid #e8ebf0;border-bottom:1px solid #e8ebf0;box-sizing:border-box;"></div>
<div class="t" style="left:303.50px;top:1058.34px;font:italic 400 12px/15px 'Liberation Sans',sans-serif;color:#a3abb9;-webkit-text-stroke:0.25px #a3abb9;letter-spacing:0.599px;">Enter order note</div>
<div style="position:absolute;left:1253px;top:1038.6px;width:1.2px;height:130px;background:#e4e8ef;"></div>
<div style="position:absolute;left:1380px;top:1038.6px;width:1.2px;height:130px;background:#e4e8ef;"></div>
<div style="position:absolute;left:1253px;top:1083px;width:263.6px;height:1.2px;background:#e4e8ef;"></div>
<div style="position:absolute;left:1253px;top:1128.8px;width:263.6px;height:1.2px;background:#e4e8ef;"></div>
<div class="t" style="left:1271.40px;top:1052.05px;font:400 14px/18px 'Liberation Sans',sans-serif;color:#434c5c;-webkit-text-stroke:0.25px #434c5c;letter-spacing:0.783px;">Item Subtotal</div>
<div class="t" style="left:1426.30px;top:1052.05px;font:400 14px/18px 'Liberation Sans',sans-serif;color:#394354;-webkit-text-stroke:0.5px #394354;letter-spacing:0.485px;">$1,1100.00</div>
<div class="t" style="left:1277.80px;top:1097.95px;font:400 14px/18px 'Liberation Sans',sans-serif;color:#434c5c;-webkit-text-stroke:0.25px #434c5c;letter-spacing:0.555px;">Fee Subtotal</div>
<div class="t" style="left:1450.20px;top:1097.95px;font:400 14px/18px 'Liberation Sans',sans-serif;color:#394354;-webkit-text-stroke:0.5px #394354;letter-spacing:1.334px;">$25.00</div>
<div class="t" style="left:1324.30px;top:1142.01px;font:700 17px/21px 'Liberation Sans',sans-serif;color:#2b3445;letter-spacing:-0.090px;">Total</div>
<div class="t" style="left:1396.70px;top:1142.01px;font:700 17px/21px 'Liberation Sans',sans-serif;color:#2b3445;letter-spacing:0.845px;">$100,200.00</div>
</div></body></html>
